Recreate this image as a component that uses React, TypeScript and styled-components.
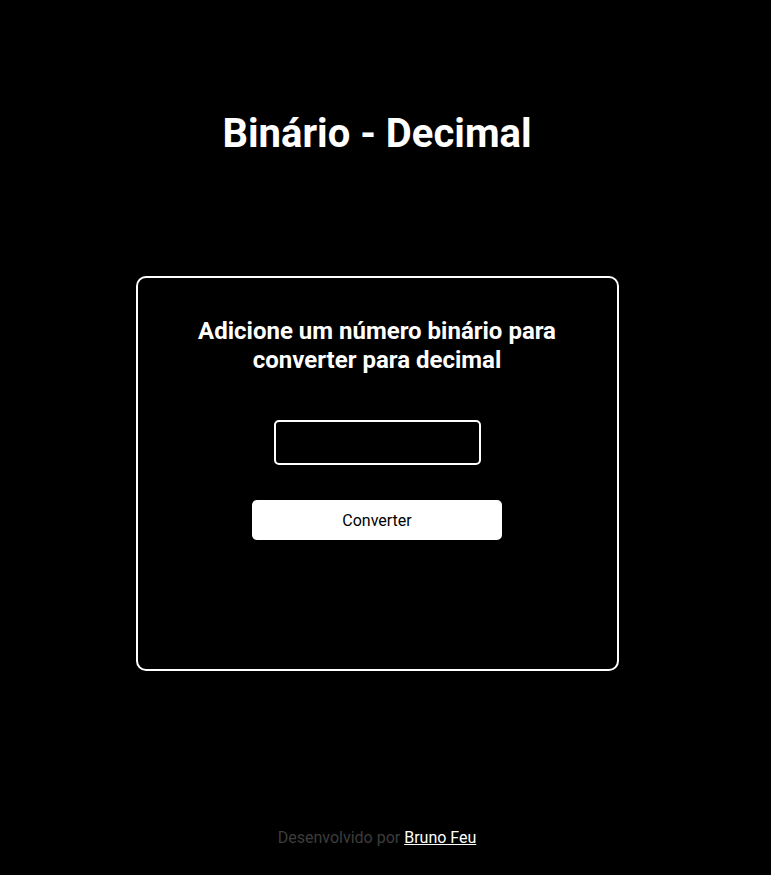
import React from "react";
import styled, { createGlobalStyle } from "styled-components";

const Global = createGlobalStyle`
  * { box-sizing: border-box; }
  html, body { margin: 0; padding: 0; background: #000; }
  body { font-family: Roboto, "Liberation Sans", Arial, sans-serif; color: #fff; }
`;

const Page = styled.div`
  min-height: 875px;
  padding-right: 17px;
  display: flex;
  flex-direction: column;
  align-items: center;
`;

const Title = styled.h1`
  margin: 110px 0 0;
  font-size: 40px;
  line-height: 47px;
  font-weight: 700;
  text-align: center;
`;

const Card = styled.section`
  margin-top: 119px;
  width: 483px;
  height: 395px;
  border: 2px solid #fff;
  border-radius: 10px;
  padding: 39px 30px 0;
  display: flex;
  flex-direction: column;
  align-items: center;
`;

const Subtitle = styled.h2`
  margin: 0;
  font-size: 24px;
  line-height: 29px;
  font-weight: 700;
  text-align: center;
`;

const Input = styled.input`
  margin-top: 45px;
  width: 207px;
  height: 45px;
  background: #000;
  border: 2px solid #fff;
  border-radius: 5px;
  color: #fff;
  font-family: inherit;
  font-size: 16px;
  padding: 0 10px;
  outline: none;
`;

const Button = styled.button`
  margin-top: 35px;
  width: 250px;
  height: 40px;
  background: #fff;
  color: #000;
  border: none;
  border-radius: 5px;
  font-family: inherit;
  font-size: 16px;
  cursor: pointer;
`;

const Footer = styled.footer`
  margin-top: auto;
  margin-bottom: 28px;
  font-size: 16px;
  line-height: 19px;
  color: #3d3d3d;
`;

const Link = styled.a`
  color: #fff;
  text-decoration: underline;
`;

export default function App() {
  return (
    <>
      <Global />
      <Page>
        <Title>Binário - Decimal</Title>
        <Card>
          <Subtitle>
            Adicione um número binário para
            <br />
            converter para decimal
          </Subtitle>
          <Input type="text" />
          <Button>Converter</Button>
        </Card>
        <Footer>
          Desenvolvido por <Link href="#">Bruno Feu</Link>
        </Footer>
      </Page>
    </>
  );
}
